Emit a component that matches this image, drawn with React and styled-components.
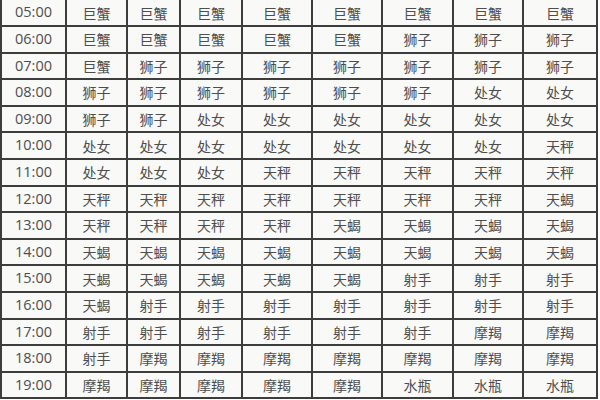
import styled, { createGlobalStyle } from "styled-components";

const GlobalStyle = createGlobalStyle`
    html, body {
        margin: 0;
        padding: 0;
        background: #ffffff;
        overflow: hidden;
    }
`

const hours = ["05:00", "06:00", "07:00", "08:00", "09:00", "10:00", "11:00", "12:00", "13:00", "14:00", "15:00", "16:00", "17:00", "18:00", "19:00"]

const signs = [
    ["巨蟹", "巨蟹", "巨蟹", "巨蟹", "巨蟹", "巨蟹", "巨蟹", "巨蟹"],
    ["巨蟹", "巨蟹", "巨蟹", "巨蟹", "巨蟹", "狮子", "狮子", "狮子"],
    ["巨蟹", "狮子", "狮子", "狮子", "狮子", "狮子", "狮子", "狮子"],
    ["狮子", "狮子", "狮子", "狮子", "狮子", "狮子", "处女", "处女"],
    ["狮子", "狮子", "处女", "处女", "处女", "处女", "处女", "处女"],
    ["处女", "处女", "处女", "处女", "处女", "处女", "处女", "天秤"],
    ["处女", "处女", "处女", "天秤", "天秤", "天秤", "天秤", "天秤"],
    ["天秤", "天秤", "天秤", "天秤", "天秤", "天秤", "天秤", "天蝎"],
    ["天秤", "天秤", "天秤", "天秤", "天蝎", "天蝎", "天蝎", "天蝎"],
    ["天蝎", "天蝎", "天蝎", "天蝎", "天蝎", "天蝎", "天蝎", "天蝎"],
    ["天蝎", "天蝎", "天蝎", "天蝎", "天蝎", "射手", "射手", "射手"],
    ["天蝎", "射手", "射手", "射手", "射手", "射手", "射手", "射手"],
    ["射手", "射手", "射手", "射手", "射手", "射手", "摩羯", "摩羯"],
    ["射手", "摩羯", "摩羯", "摩羯", "摩羯", "摩羯", "摩羯", "摩羯"],
    ["摩羯", "摩羯", "摩羯", "摩羯", "摩羯", "水瓶", "水瓶", "水瓶"],
]

const App = () => {
    return (
        <>
            <GlobalStyle />
            <Page>
                <Grid>
                    {
                        hours.map((hour, index) => (
                            <Row key={hour}>
                                <TimeCell>{hour}</TimeCell>
                                {
                                    signs[index].map((sign, i) => (
                                        <SignCell key={i}>{sign}</SignCell>
                                    ))
                                }
                            </Row>
                        ))
                    }
                </Grid>
            </Page>
        </>
    );
};

const Page = styled.div`
    width: 600px;
    height: 400px;
    background: #ffffff;
`

const Grid = styled.div`
    display: grid;
    grid-template-columns: 63px 59px 51px 60px 68px 68px 69px 68px 72px;
    grid-template-rows: 25px repeat(14, 24.6px);
    gap: 2px;
    padding: 0 2px 2px 2px;
    width: max-content;
    background: #3d3d3d;
`

const Row = styled.div`
    display: contents;
`

const Cell = styled.div`
    background: #f9f9f7;
    color: #4e4e4e;
    display: flex;
    align-items: center;
    justify-content: center;
    font-size: 14px;
    line-height: 1;
`

const TimeCell = styled(Cell)`
    font-family: "Open Sans", "Noto Sans", sans-serif;
    font-size: 14.5px;
`

const SignCell = styled(Cell)`
    font-family: "Noto Sans CJK SC", sans-serif;
`

export default App;
